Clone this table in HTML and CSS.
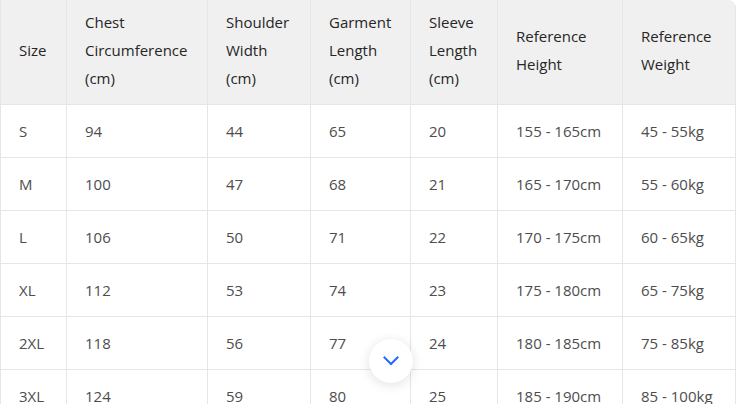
FILE: index.html
```html
<!DOCTYPE html>
<html lang="en">
<head>
<meta charset="utf-8">
<title>Size Chart</title>
<link rel="stylesheet" href="styles.css">
</head>
<body>
<div class="wrap">
  <table class="chart">
    <thead>
      <tr>
        <th class="c1">Size</th>
        <th class="c2">Chest<br>Circumference<br>(cm)</th>
        <th class="c3">Shoulder<br>Width<br>(cm)</th>
        <th class="c4">Garment<br>Length<br>(cm)</th>
        <th class="c5">Sleeve<br>Length<br>(cm)</th>
        <th class="c6">Reference<br>Height</th>
        <th class="c7">Reference<br>Weight</th>
      </tr>
    </thead>
    <tbody>
      <tr><td>S</td><td>94</td><td>44</td><td>65</td><td>20</td><td>155 - 165cm</td><td>45 - 55kg</td></tr>
      <tr><td>M</td><td>100</td><td>47</td><td>68</td><td>21</td><td>165 - 170cm</td><td>55 - 60kg</td></tr>
      <tr><td>L</td><td>106</td><td>50</td><td>71</td><td>22</td><td>170 - 175cm</td><td>60 - 65kg</td></tr>
      <tr><td>XL</td><td>112</td><td>53</td><td>74</td><td>23</td><td>175 - 180cm</td><td>65 - 75kg</td></tr>
      <tr><td>2XL</td><td>118</td><td>56</td><td>77</td><td>24</td><td>180 - 185cm</td><td>75 - 85kg</td></tr>
      <tr><td>3XL</td><td>124</td><td>59</td><td>80</td><td>25</td><td>185 - 190cm</td><td>85 - 100kg</td></tr>
    </tbody>
  </table>
  <button class="more" type="button" aria-label="Scroll down">
    <svg width="16" height="10" viewBox="0 0 16 10"><path d="M1.5 1.5 L8 8 L14.5 1.5" fill="none" stroke="#1f6bff" stroke-width="2" stroke-linecap="square"/></svg>
  </button>
</div>
</body>
</html>
```

FILE: styles.css
```css
html, body {
  margin: 0;
  padding: 0;
  background: #ffffff;
}

.wrap {
  position: relative;
  width: 736px;
  height: 404px;
  overflow: hidden;
  border-top-right-radius: 8px;
}

.chart {
  border-collapse: separate;
  border-spacing: 0;
  table-layout: fixed;
  width: 736px;
  font-family: "Open Sans", "Noto Sans", sans-serif;
  font-size: 15px;
  line-height: 28px;
}

.chart th,
.chart td {
  box-sizing: border-box;
  text-align: left;
  vertical-align: middle;
  padding: 0 10px 0 18px;
  border-right: 1px solid #e6e6e6;
  border-bottom: 1px solid #e6e6e6;
  white-space: nowrap;
}

.chart th:first-child,
.chart td:first-child {
  border-left: 1px solid #e6e6e6;
}

.chart th {
  height: 105px;
  padding-top: 8px;
  padding-bottom: 12px;
  background: #f0f0f0;
  color: #262626;
  font-weight: 400;
}

.chart td {
  height: 53px;
  color: #4d4d4d;
}

.c1 { width: 67px; }
.c2 { width: 141px; }
.c3 { width: 103px; }
.c4 { width: 100px; }
.c5 { width: 87px; }
.c6 { width: 125px; }
.c7 { width: 113px; }

.more {
  position: absolute;
  left: 369px;
  top: 339px;
  width: 44px;
  height: 44px;
  padding: 0;
  border: none;
  border-radius: 50%;
  background: #ffffff;
  box-shadow: 0 2px 12px rgba(0, 0, 0, 0.12);
  display: flex;
  align-items: center;
  justify-content: center;
}

.more svg {
  display: block;
}
```
